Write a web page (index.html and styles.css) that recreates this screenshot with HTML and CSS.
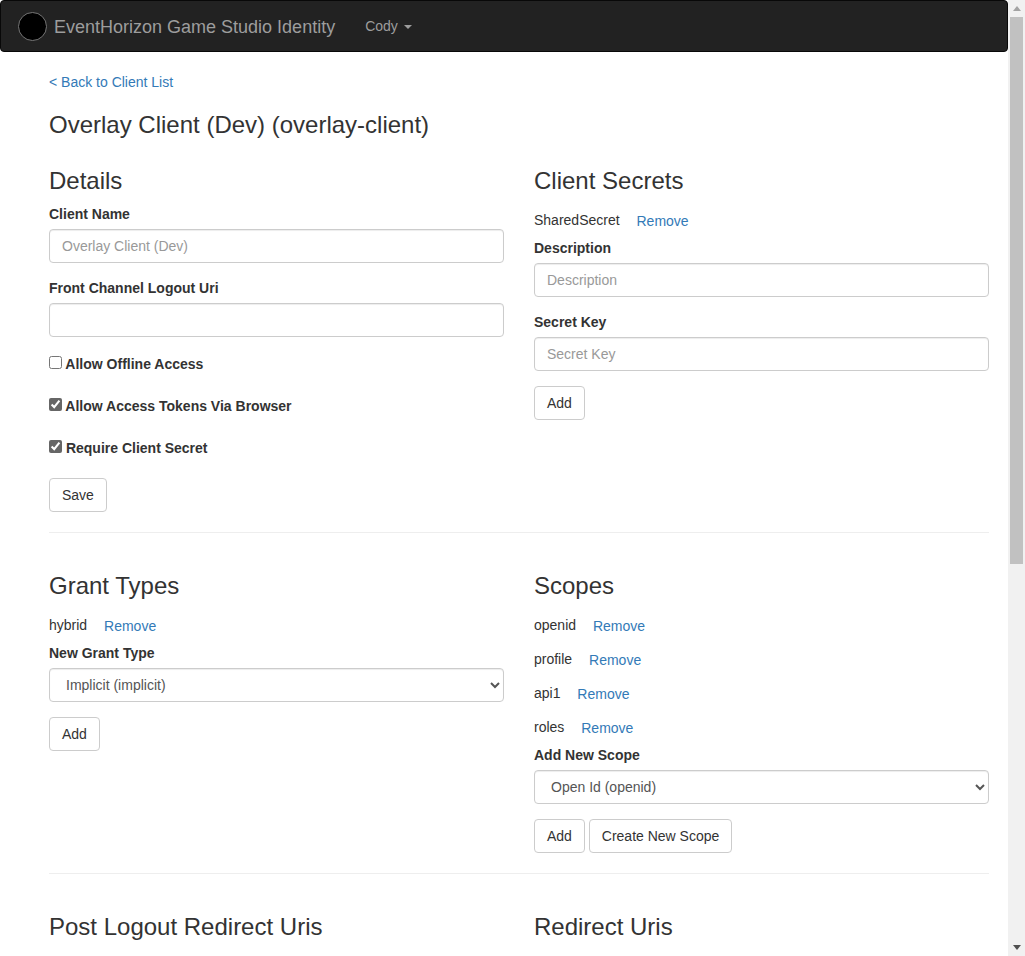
FILE: index.html
```html
<!DOCTYPE html>
<html lang="en">
<head>
    <meta charset="UTF-8">
    <meta name="viewport" content="width=device-width, initial-scale=1.0">
    <title>Overlay Client (Dev)</title>
    <link rel="stylesheet" href="styles.css">
</head>
<body>
    <div class="window">
        <div class="page">
            <nav class="navbar">
                <span class="logo"></span>
                <a class="brand" href="#">EventHorizon Game Studio Identity</a>
                <a class="nav-user" href="#">Cody <span class="caret"></span></a>
            </nav>

            <div class="content">
                <a class="back-link" href="#">&lt; Back to Client List</a>
                <h3>Overlay Client (Dev) (overlay-client)</h3>

                <div class="row">
                    <div>
                        <h3>Details</h3>
                        <div class="form-group">
                            <label for="name">Client Name</label>
                            <input type="text" id="name" class="form-control" placeholder="Overlay Client (Dev)">
                        </div>
                        <div class="form-group">
                            <label for="logout">Front Channel Logout Uri</label>
                            <input type="text" id="logout" class="form-control">
                        </div>
                        <div class="check-group">
                            <label><input type="checkbox"> Allow Offline Access</label>
                        </div>
                        <div class="check-group">
                            <label><input type="checkbox" checked> Allow Access Tokens Via Browser</label>
                        </div>
                        <div class="check-group">
                            <label><input type="checkbox" checked> Require Client Secret</label>
                        </div>
                        <button class="btn" type="button">Save</button>
                    </div>
                    <div>
                        <h3>Client Secrets</h3>
                        <div class="item">SharedSecret <a class="btn-link" href="#">Remove</a></div>
                        <div class="form-group">
                            <label for="description">Description</label>
                            <input type="text" id="description" class="form-control" placeholder="Description">
                        </div>
                        <div class="form-group">
                            <label for="secret">Secret Key</label>
                            <input type="text" id="secret" class="form-control" placeholder="Secret Key">
                        </div>
                        <button class="btn" type="button">Add</button>
                    </div>
                </div>

                <hr>

                <div class="row">
                    <div>
                        <h3>Grant Types</h3>
                        <div class="item">hybrid <a class="btn-link" href="#">Remove</a></div>
                        <div class="form-group">
                            <label for="grant">New Grant Type</label>
                            <select id="grant" class="form-control">
                                <option>Implicit (implicit)</option>
                            </select>
                        </div>
                        <button class="btn" type="button">Add</button>
                    </div>
                    <div>
                        <h3>Scopes</h3>
                        <div class="item">openid <a class="btn-link" href="#">Remove</a></div>
                        <div class="item">profile <a class="btn-link" href="#">Remove</a></div>
                        <div class="item">api1 <a class="btn-link" href="#">Remove</a></div>
                        <div class="item">roles <a class="btn-link" href="#">Remove</a></div>
                        <div class="form-group">
                            <label for="scope">Add New Scope</label>
                            <select id="scope" class="form-control">
                                <option>Open Id (openid)</option>
                            </select>
                        </div>
                        <button class="btn" type="button">Add</button>
                        <button class="btn" type="button">Create New Scope</button>
                    </div>
                </div>

                <hr>

                <div class="row">
                    <div>
                        <h3>Post Logout Redirect Uris</h3>
                    </div>
                    <div>
                        <h3>Redirect Uris</h3>
                    </div>
                </div>
            </div>
        </div>

        <div class="scrollbar">
            <span class="arrow-up"></span>
            <span class="thumb"></span>
            <span class="arrow-down"></span>
        </div>
    </div>
</body>
</html>
```

FILE: styles.css
```css
* {
    box-sizing: border-box;
}
html, body {
    margin: 0;
    height: 100%;
    overflow: hidden;
}
body {
    font-family: "Liberation Sans", Arial, sans-serif;
    font-size: 14px;
    line-height: 20px;
    color: #333;
    background-color: #fff;
}
a {
    color: #337ab7;
    text-decoration: none;
}
.window {
    display: flex;
    height: 956px;
}
.page {
    width: 1008px;
    overflow: hidden;
}

/* Barra superior */
.navbar {
    display: flex;
    align-items: center;
    height: 52px;
    background-color: #222;
    border: 1px solid #080808;
    border-radius: 4px;
}
.logo {
    width: 29px;
    height: 29px;
    margin-left: 17px;
    background-color: #000;
    border: 1px solid #777;
    border-radius: 50%;
}
.brand {
    margin-left: 7px;
    margin-top: 2px;
    font-size: 18px;
    color: #9d9d9d;
}
.nav-user {
    margin-left: 30px;
    color: #9d9d9d;
}
.caret {
    display: inline-block;
    margin-left: 2px;
    vertical-align: middle;
    border-top: 4px solid #9d9d9d;
    border-left: 4px solid transparent;
    border-right: 4px solid transparent;
}

/* Contenido */
.content {
    padding: 20px 19px 0 49px;
}
.back-link {
    display: block;
}
h3 {
    margin: 20px 0 10px;
    font-size: 24px;
    font-weight: 500;
    line-height: 26px;
}
.row {
    display: grid;
    grid-template-columns: 455px 455px;
    column-gap: 30px;
}
hr {
    margin: 20px 0;
    border: 0;
    border-top: 1px solid #eee;
}
label {
    display: inline-block;
    margin-bottom: 5px;
    font-weight: bold;
}
.form-group {
    margin-bottom: 15px;
}
.form-control {
    display: block;
    width: 100%;
    height: 34px;
    padding: 6px 12px;
    font-family: inherit;
    font-size: 14px;
    line-height: 20px;
    color: #555;
    background-color: #fff;
    border: 1px solid #ccc;
    border-radius: 4px;
    box-shadow: inset 0 1px 1px rgba(0, 0, 0, 0.075);
}
.form-control::placeholder {
    color: #999;
}
.check-group {
    padding-top: 2px;
    margin-bottom: 15px;
}
.check-group input {
    margin: 0;
    vertical-align: 0;
    accent-color: #666;
}
.item {
    height: 34px;
    line-height: 32px;
}
.btn-link {
    display: inline-block;
    padding: 0 12px 0 13px;
    line-height: 34px;
    vertical-align: top;
}
.btn {
    height: 34px;
    padding: 6px 12px;
    font-family: inherit;
    font-size: 14px;
    line-height: 20px;
    color: #333;
    background-color: #fff;
    border: 1px solid #ccc;
    border-radius: 4px;
}

/* Barra de desplazamiento */
.scrollbar {
    display: flex;
    flex-direction: column;
    align-items: center;
    width: 17px;
    background-color: #f1f1f1;
}
.arrow-up {
    margin-top: 6px;
    border-bottom: 5px solid #a3a3a3;
    border-left: 4px solid transparent;
    border-right: 4px solid transparent;
}
.thumb {
    width: 13px;
    height: 547px;
    margin-top: 6px;
    background-color: #c1c1c1;
}
.arrow-down {
    margin-top: auto;
    margin-bottom: 6px;
    border-top: 5px solid #505050;
    border-left: 4px solid transparent;
    border-right: 4px solid transparent;
}
```
